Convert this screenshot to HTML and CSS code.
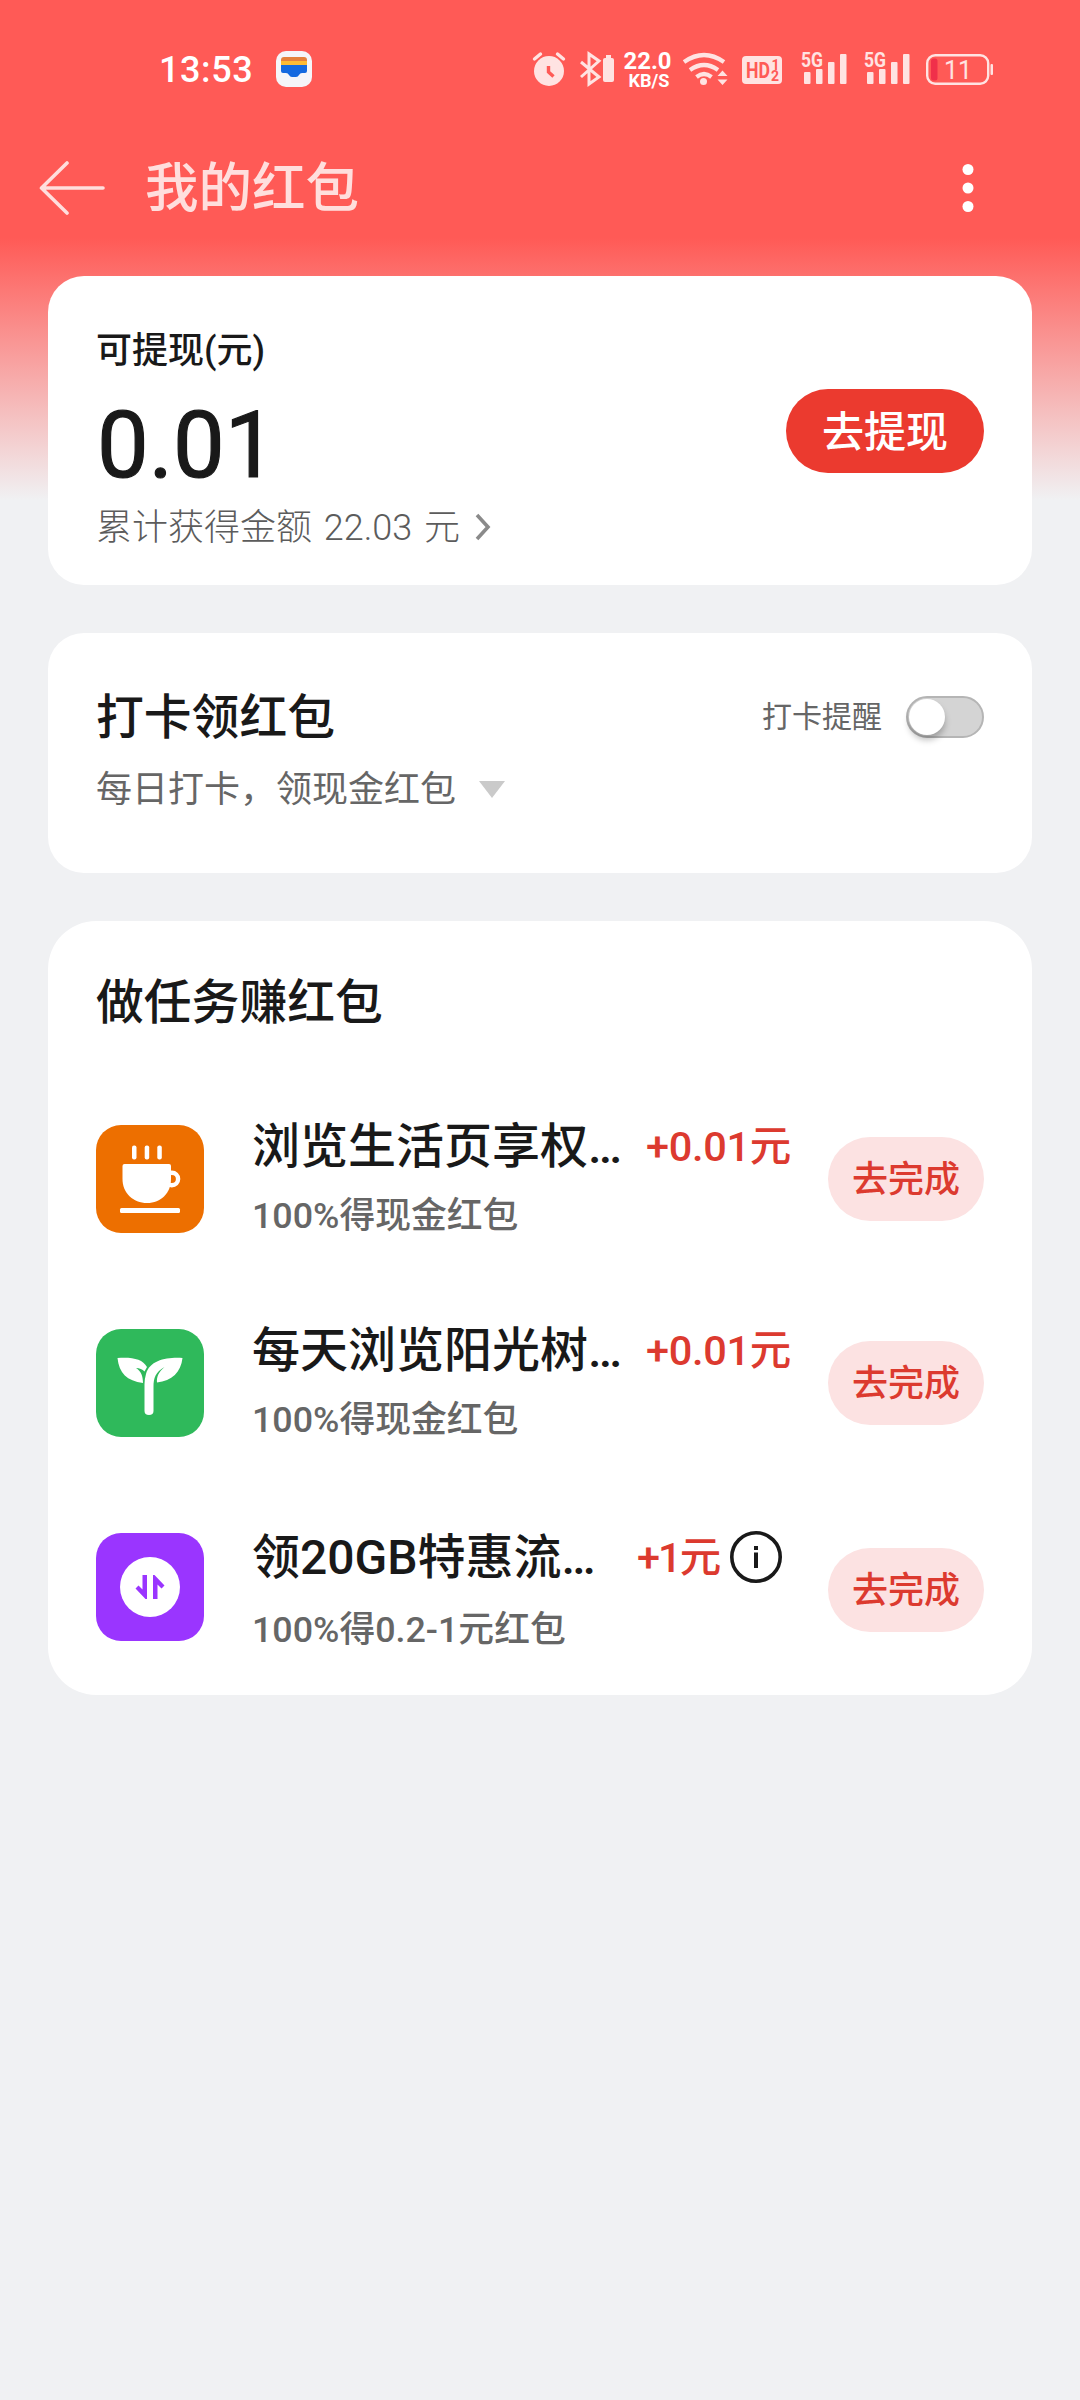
FILE: index.html
```html
<!DOCTYPE html>
<html lang="zh-CN">
<head>
<meta charset="utf-8">
<title>我的红包</title>
<link rel="stylesheet" href="styles.css">
</head>
<body>
<div class="screen">
  <div class="statusbar">
    <span class="clock">13:53</span>
    <svg class="wallet" width="36" height="36" viewBox="0 0 36 36">
      <rect width="36" height="36" rx="10" fill="#f5f5f9"/>
      <path d="M5 9q0-3 3-3h20q3 0 3 3v5H5z" fill="#e5803c"/>
      <path d="M5 10h26v5H5z" fill="#fdbb35"/>
      <path d="M5 14h26v6q0 2-2 2h-3q-2 0-3 2-1 2-3 2h-4q-2 0-3-2-1-2-3-2H7q-2 0-2-2z" fill="#1469e0"/>
    </svg>
    <svg class="status-icons" width="466" height="60" viewBox="0 0 466 60">
      <g fill="#ffe3e2">
        <circle cx="19" cy="31" r="15"/>
        <g stroke="#ffe3e2" stroke-width="3.4" stroke-linecap="round"><path d="M4.500 19l6-5M27.500 14l6 5"/></g>
        <path d="M18.500 26v6l5 4.500" fill="none" stroke="#ff5a56" stroke-width="3.400"/>
        <path d="M51 22l18 15-10 7V14l10 7-18 16" fill="none" stroke="#ffe3e2" stroke-width="3"/>
        <rect x="73" y="18" width="11" height="24" rx="2"/><rect x="76" y="15" width="5" height="3"/>
        <g fill="none" stroke="#ffe3e2" stroke-width="4.200">
          <path d="M154 22q20-14 40 0M160 30q14-10 28 0M166.500 37q7.500-6 15 0"/>
        </g>
        <circle cx="173.500" cy="41.500" r="3.500"/>
        <path d="M187.500 36l5-5.500 5 5.500zM187.500 39.500l5 5.500 5-5.500z"/>
        <rect x="212" y="16" width="40" height="28" rx="4"/>
        <rect x="274" y="32" width="6.500" height="12" rx="1"/><rect x="286" y="29" width="6.500" height="15" rx="1"/><rect x="298" y="22" width="6.500" height="22" rx="1"/><rect x="310" y="14" width="6.500" height="30" rx="1"/>
        <rect x="337" y="32" width="6.500" height="12" rx="1"/><rect x="349" y="29" width="6.500" height="15" rx="1"/><rect x="361" y="22" width="6.500" height="22" rx="1"/><rect x="373" y="14" width="6.500" height="30" rx="1"/>
        <rect x="397.200" y="15.200" width="61" height="28.600" rx="8" fill="none" stroke="#ffe3e2" stroke-width="2.400"/>
        <rect x="401" y="18.500" width="6.500" height="22" rx="2.500" fill="#f0304a"/>
        <rect x="460.500" y="24" width="2.500" height="11" rx="1"/>
      </g>
      <g class="status-text">
        <text x="93.500" y="29" font-size="23" textLength="48" lengthAdjust="spacingAndGlyphs" class="white">22.0</text>
        <text x="98.500" y="46.500" font-size="17.500" textLength="41" lengthAdjust="spacingAndGlyphs" class="white">KB/S</text>
        <text x="216" y="38" font-size="22" textLength="24" lengthAdjust="spacingAndGlyphs" class="cut">HD</text>
        <text x="241.500" y="29.500" font-size="14" class="cut">1</text>
        <text x="241" y="41" font-size="14" class="cut">2</text>
        <text x="271" y="27" font-size="20" textLength="22" lengthAdjust="spacingAndGlyphs">5G</text>
        <text x="334" y="27" font-size="20" textLength="22" lengthAdjust="spacingAndGlyphs">5G</text>
        <text x="414" y="38.500" font-size="25" font-weight="400" textLength="28">11</text>
      </g>
    </svg>
  </div>

  <div class="appbar">
    <svg class="back" width="66" height="54" viewBox="0 0 66 54">
      <path d="M28 2L2.500 27 28 52M2.500 27H64" fill="none" stroke="#ffdedd" stroke-width="3.600" stroke-linecap="round" stroke-linejoin="round"/>
    </svg>
    <h1 class="page-title">我的红包</h1>
    <svg class="more" width="12" height="50" viewBox="0 0 12 50" fill="#fff">
      <circle cx="6" cy="6.500" r="5.500"/><circle cx="6" cy="25" r="5.500"/><circle cx="6" cy="43.500" r="5.500"/>
    </svg>
  </div>

  <main class="cards">
    <section class="card balance">
      <div class="balance-info">
        <div class="balance-label">可提现(元)</div>
        <div class="balance-amount">0.01</div>
        <div class="balance-total">累计获得金额 22.03 元
          <svg class="chevron" width="16" height="28" viewBox="0 0 16 28"><path d="M2 2l11 12L2 26" fill="none" stroke="#8a8a8a" stroke-width="3.600"/></svg>
        </div>
      </div>
      <button class="withdraw">去提现</button>
    </section>

    <section class="card checkin">
      <div class="checkin-head">
        <h2 class="section-title">打卡领红包</h2>
        <div class="reminder"><span>打卡提醒</span><span class="switch"><span class="knob"></span></span></div>
      </div>
      <div class="checkin-sub">每日打卡，领现金红包
        <svg class="caret" width="26" height="17" viewBox="0 0 26 17"><path d="M0 0h26L13 17z" fill="#cacaca"/></svg>
      </div>
    </section>

    <section class="card tasks">
      <h2 class="section-title">做任务赚红包</h2>
      <div class="task">
        <svg class="task-icon" width="108" height="108" viewBox="0 0 108 108">
          <rect width="108" height="108" rx="25" fill="#ed6f00"/>
          <g fill="#fff"><rect x="36" y="20.500" width="4.500" height="14" rx="2"/><rect x="48.700" y="20.500" width="4.500" height="14" rx="2"/><rect x="61.300" y="20.500" width="4.500" height="14" rx="2"/>
          <path d="M28.500 39h44.500q2 0 2 2v13c0 14-10 24-24 24S26.500 68 26.500 54V41q0-2 2-2z"/>
          <rect x="24" y="83" width="60" height="5" rx="1.500"/></g>
          <circle cx="75.800" cy="54" r="6.300" fill="none" stroke="#fff" stroke-width="4.400"/>
        </svg>
        <div class="task-info">
          <div class="task-line"><span class="task-name">浏览生活页享权…</span><span class="reward">+0.01元</span></div>
          <div class="task-desc">100%得现金红包</div>
        </div>
        <button class="go">去完成</button>
      </div>
      <div class="task">
        <svg class="task-icon" width="108" height="108" viewBox="0 0 108 108">
          <rect width="108" height="108" rx="25" fill="#2fb95b"/>
          <g fill="#fff"><path d="M21.500 29c15-1 25 1 29.500 9l-2.500 4.500c-2-2-5-3.500-8.500-3.500 5 3 7 8 7 15C31 52 23 44 21.500 29z"/>
          <path d="M86.500 29C71 28 54 31 50 45q-1.500 5-1.500 10v27q0 4 4.500 4t4.500-4V58c0-9 2-15 11-20-6 5-8 10-7.500 15.500C76 52 85 43 86.500 29z"/></g>
        </svg>
        <div class="task-info">
          <div class="task-line"><span class="task-name">每天浏览阳光树…</span><span class="reward">+0.01元</span></div>
          <div class="task-desc">100%得现金红包</div>
        </div>
        <button class="go">去完成</button>
      </div>
      <div class="task task-data">
        <svg class="task-icon" width="108" height="108" viewBox="0 0 108 108">
          <rect width="108" height="108" rx="25" fill="#9a35ff"/>
          <circle cx="54" cy="54" r="30" fill="#fff"/>
          <path d="M46.500 42h4.500v24h-1.500L39.500 55.500l3-3 4 4zM57 66V42h1.500L68.500 52.500l-3 3-4-4V66z" fill="#9a35ff"/>
        </svg>
        <div class="task-info">
          <div class="task-line"><span class="task-name">领20GB特惠流…</span><span class="reward">+1元</span>
            <svg class="info" width="52" height="52" viewBox="0 0 52 52"><circle cx="26" cy="26" r="24.200" fill="none" stroke="#191919" stroke-width="3.600"/><path d="M24 15h4v4h-4zM24 21.500h4V37h-4z" fill="#191919"/></svg>
          </div>
          <div class="task-desc">100%得0.2-1元红包</div>
        </div>
        <button class="go">去完成</button>
      </div>
    </section>
  </main>
</div>
</body>
</html>
```
FILE: styles.css
```css
* { box-sizing: border-box; }
body {
  margin: 0;
  font-family: Roboto, "Noto Sans CJK SC", sans-serif;
  color: #191919;
}
h1, h2 { margin: 0; font-weight: 500; }
svg { display: block; flex: none; }
button { border: 0; padding: 0; font: inherit; }
.screen {
  width: 1080px;
  height: 2400px;
  background: linear-gradient(#ff5a56 0, #ff5a56 238px, #f0f1f3 500px);
  overflow: hidden;
}

.statusbar {
  display: flex;
  height: 140px;
  padding: 40px 0 0 159px;
}
.clock {
  width: 117px;
  font-size: 36px;
  line-height: 61px;
  font-weight: 500;
  letter-spacing: .6px;
  color: #fff;
}
.wallet { margin-top: 11px; }
.status-icons { margin: 0 0 0 218px; }
.status-text { font-weight: 700; fill: #ffe3e2; }
.status-text .white { fill: #fff; }
.status-text .cut { fill: #ff5a56; }

.appbar {
  display: flex;
  align-items: center;
  height: 96px;
  padding: 0 106px 0 39px;
}
.page-title {
  flex: 1;
  margin-left: 40px;
  padding-top: 2px;
  font-size: 53.5px;
  line-height: 80px;
  color: #ffdedd;
}

.cards {
  display: flex;
  flex-direction: column;
  gap: 48px;
  padding: 40px 48px 0;
}
.card { background: #fff; border-radius: 36px; padding: 0 48px; }
.section-title { font-size: 47.8px; line-height: 64px; }

.balance {
  display: flex;
  justify-content: space-between;
  height: 309px;
}
.balance-label { margin-top: 51px; font-size: 36px; line-height: 48px; font-weight: 500; }
.balance-amount {
  margin-top: 21px;
  padding-left: 1px;
  font-size: 92px;
  line-height: 100px;
  font-weight: 400;
  -webkit-text-stroke: 1.2px #191919;
}
.balance-total {
  display: flex;
  align-items: center;
  margin-top: 8px;
  font-size: 36px;
  line-height: 48px;
  font-weight: 300;
  word-spacing: 3px;
  color: #5c5c5c;
}
.chevron { margin: -2px 0 0 15px; }
.withdraw {
  width: 198px;
  height: 84px;
  margin-top: 113px;
  padding-bottom: 5px;
  border-radius: 42px;
  background: #eb3a2f;
  color: #fff;
  font-size: 42px;
  font-weight: 500;
}

.checkin { height: 240px; padding-top: 53px; }
.checkin-head { display: flex; justify-content: space-between; }
.reminder {
  display: flex;
  align-items: center;
  gap: 24px;
  height: 62px;
  font-size: 30px;
  line-height: 60px;
  color: #666;
}
.switch {
  width: 78px;
  height: 42px;
  padding: 1px;
  border: 2px solid #b5b5b5;
  border-radius: 21px;
  background: #d4d4d4;
}
.knob {
  display: block;
  width: 36px;
  height: 36px;
  border-radius: 50%;
  background: #fff;
  box-shadow: 0 5px 6px rgba(0, 0, 0, .25);
}
.checkin-sub {
  display: flex;
  align-items: center;
  margin-top: 15px;
  font-size: 36px;
  line-height: 50px;
  color: #666;
}
.caret { margin: -2px 0 0 23px; }

.tasks { height: 774px; padding-top: 50px; border-radius: 48px; }
.tasks .section-title { margin-bottom: 42px; }
.task { display: flex; align-items: center; height: 204px; }
.task-info { width: 564px; margin-left: 48px; padding-bottom: 2px; }
.task-line { display: flex; height: 64px; align-items: center; white-space: nowrap; }
.task-name { width: 394px; font-size: 48px; line-height: 64px; font-weight: 500; }
.reward {
  font-size: 41.5px;
  line-height: 64px;
  font-weight: 500;
  letter-spacing: -.3px;
  color: #dc3a2f;
}
.task-desc { margin-top: 12px; font-size: 35.8px; line-height: 50px; font-weight: 500; color: #666; }
.go {
  width: 156px;
  height: 84px;
  margin-left: 12px;
  padding-bottom: 6px;
  border-radius: 42px;
  background: #fce2e2;
  color: #dc3a2f;
  font-size: 36px;
  font-weight: 500;
}
.task-data .task-name { width: 385px; }
.task-data .task-info { padding: 6px 0 0; }
.task-data .task-desc { margin-top: 15px; }
.task-data .go { margin-top: 6px; }
.task-data .reward { letter-spacing: -2px; }
.info { margin: -1px 0 0 11px; }
```
